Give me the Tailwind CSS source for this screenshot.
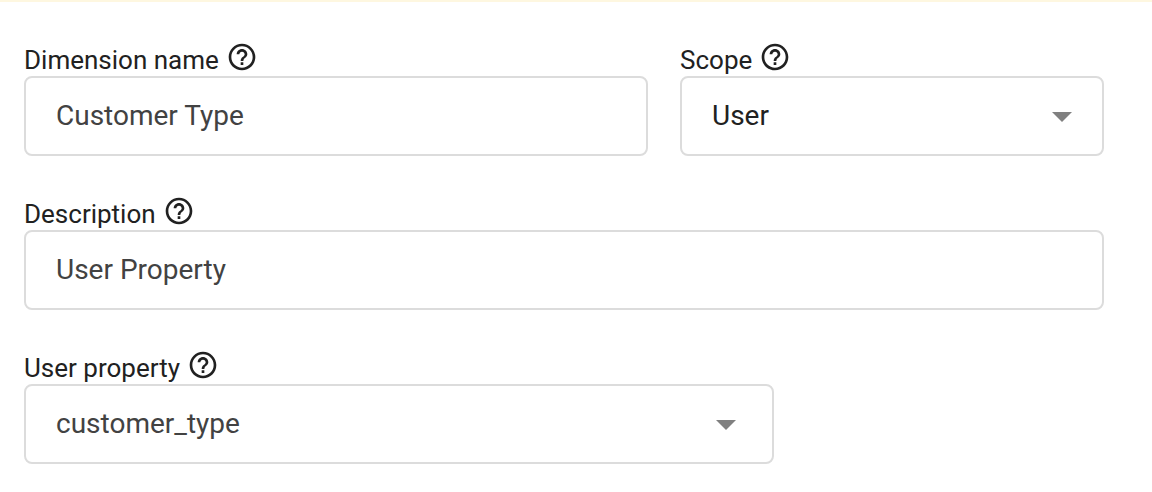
<!DOCTYPE html>
<html lang="en">
<head>
    <meta charset="UTF-8">
    <meta name="viewport" content="width=device-width, initial-scale=1.0">
    <title>Custom dimension</title>
    <script src="https://cdn.jsdelivr.net/npm/@tailwindcss/browser@4"></script>
</head>
<body class="bg-white font-['Roboto',sans-serif] text-[#212121]">
    <!-- Icon shared by the help buttons -->
    <svg class="hidden">
        <symbol id="help" viewBox="0 0 24 24">
            <path d="M11 18h2v-2h-2v2zm1-16C6.48 2 2 6.48 2 12s4.48 10 10 10 10-4.48 10-10S17.52 2 12 2zm0 18c-4.41 0-8-3.59-8-8s3.59-8 8-8 8 3.59 8 8-3.59 8-8 8zm0-14c-2.21 0-4 1.79-4 4h2c0-1.1.9-2 2-2s2 .9 2 2c0 2-3 1.75-3 5h2c0-2.25 3-2.5 3-5 0-2.21-1.79-4-4-4z"/>
        </symbol>
    </svg>

    <div class="h-[2px] bg-[#fef7e0]"></div>

    <form class="flex flex-col gap-[39px] pl-6 pr-12 pt-[39px] pb-7">
        <div class="grid grid-cols-[78fr_53fr] gap-8">
            <div class="min-w-0">
                <div class="flex items-end gap-[7px]">
                    <label for="name" class="text-[26px] leading-8">Dimension name</label>
                    <button type="button" aria-label="Help: Dimension name" class="mb-[3px]">
                        <svg class="block size-8 fill-current"><use href="#help"/></svg>
                    </button>
                </div>
                <input id="name" type="text" value="Customer Type" class="block w-full h-20 px-[30px] pb-[2px] border-2 border-[#dcdcdc] rounded-lg bg-white text-[28px] text-[#424242]">
            </div>

            <div class="min-w-0">
                <div class="flex items-end gap-[7px]">
                    <label for="scope" class="text-[26px] leading-8">Scope</label>
                    <button type="button" aria-label="Help: Scope" class="mb-[3px]">
                        <svg class="block size-8 fill-current"><use href="#help"/></svg>
                    </button>
                </div>
                <div class="relative">
                    <select id="scope" class="block appearance-none w-full h-20 px-[30px] border-2 border-[#dcdcdc] rounded-lg bg-white text-[28px]">
                        <option>User</option>
                        <option>Event</option>
                    </select>
                    <svg class="absolute right-8 top-9 w-5 h-[10px] fill-[#808080] pointer-events-none" viewBox="0 0 20 10"><path d="M0 0h20L10 10z"/></svg>
                </div>
            </div>
        </div>

        <div>
            <div class="flex items-end gap-[7px]">
                <label for="description" class="text-[26px] leading-8">Description</label>
                <button type="button" aria-label="Help: Description" class="mb-[3px]">
                    <svg class="block size-8 fill-current"><use href="#help"/></svg>
                </button>
            </div>
            <input id="description" type="text" value="User Property" class="block w-full h-20 px-[30px] pb-[2px] border-2 border-[#dcdcdc] rounded-lg bg-white text-[28px] text-[#424242]">
        </div>

        <div class="w-full max-w-[750px]">
            <div class="flex items-end gap-[7px]">
                <label for="property" class="text-[26px] leading-8">User property</label>
                <button type="button" aria-label="Help: User property" class="mb-[3px]">
                    <svg class="block size-8 fill-current"><use href="#help"/></svg>
                </button>
            </div>
            <div class="relative">
                <select id="property" class="block appearance-none w-full h-20 px-[30px] border-2 border-[#dcdcdc] rounded-lg bg-white text-[28px] text-[#424242]">
                    <option>customer_type</option>
                </select>
                <svg class="absolute right-[38px] top-9 w-5 h-[10px] fill-[#808080] pointer-events-none" viewBox="0 0 20 10"><path d="M0 0h20L10 10z"/></svg>
            </div>
        </div>
    </form>
</body>
</html>
